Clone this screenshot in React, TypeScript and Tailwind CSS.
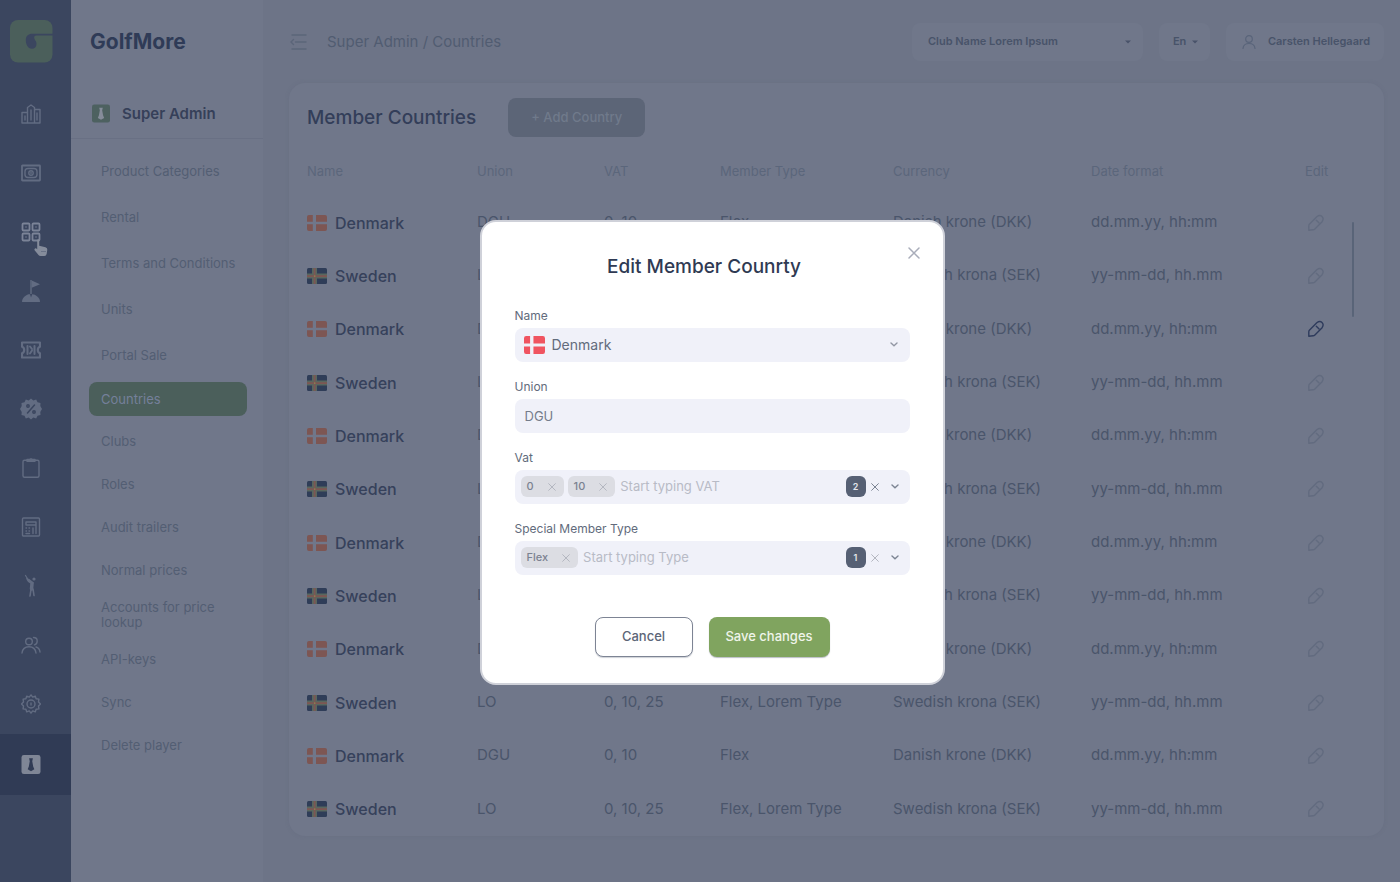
import React, { useState } from "react";

type IconProps = { className?: string };

function Glyph({ className = "size-5", children }: { className?: string; children: React.ReactNode }) {
  return (
    <svg
      viewBox="0 0 20 20"
      className={className}
      fill="none"
      stroke="currentColor"
      strokeWidth="1.4"
      strokeLinecap="round"
      strokeLinejoin="round"
      aria-hidden="true"
    >
      {children}
    </svg>
  );
}

const ChartIcon = () => (
  <Glyph>
    <path d="M1 19V8.500h5.500M6.500 19V3.500L10 1l3.500 2.500V19M13.500 5.500H19V19M1 19h18M4 12v4M10 6v10M16 9v7" />
  </Glyph>
);
const MoneyIcon = () => (
  <Glyph>
    <rect x="1" y="2.500" width="18" height="15" rx="0.500" strokeWidth="1.800" />
    <rect x="4" y="5.500" width="12" height="9" rx="3" />
    <circle cx="10" cy="10" r="2.200" />
    <path d="M10 9.500v1" />
  </Glyph>
);
const GridIcon = () => (
  <Glyph>
    <rect x="1.500" y="1.500" width="7" height="7" rx="1" strokeWidth="1.800" />
    <rect x="11.500" y="1.500" width="7" height="7" rx="1" strokeWidth="1.800" />
    <rect x="1.500" y="11.500" width="7" height="7" rx="1" strokeWidth="1.800" />
    <rect x="11.500" y="11.500" width="7" height="7" rx="1" strokeWidth="1.800" />
    <path d="M5 5h.01M15 5h.01M5 15h.01M15 15h.01" />
  </Glyph>
);
const FlagIcon = () => (
  <svg viewBox="0 0 20 24" className="h-6 w-5" fill="currentColor" aria-hidden="true">
    <path d="M9.300 1h1.400v14H9.300z" />
    <path d="M10.700 1.500 19 5.200l-8.300 3.500z" />
    <path d="M1 23c0-3 1.500-5 4-6.500 1.500-1 3-1.500 4-1.200l1 3.200 1.200-3.200c2 0 3.300.7 4.800 2 2 1.500 3 3.200 3 5.700z" />
  </svg>
);
const TicketIcon = () => (
  <Glyph>
    <path
      strokeWidth="2.200"
      d="M1 2.500h18v4.300c-1.500.4-2.200 1.500-2.200 3.200s.7 2.800 2.200 3.200v4.300H1v-4.300c1.500-.4 2.200-1.500 2.200-3.200S2.500 7.200 1 6.800z"
    />
    <path d="M6.500 6v8M9 6.500l2 2.500M9 13.500l2-3M13.500 6v8" strokeWidth="2" />
  </Glyph>
);
const DiscountIcon = () => (
  <svg viewBox="0 0 22 22" className="size-[22px]" aria-hidden="true">
    <path
      fill="currentColor"
      d="m11 .5 2.300 2 2.900-1 1.300 2.800 3 .7-.2 3.100L22 11l-1.700 2.900.2 3.100-3 .7-1.300 2.800-2.900-1-2.300 2-2.300-2-2.900 1-1.300-2.800-3-.7.2-3.100L0 11l1.700-2.900L1.500 5l3-.7 1.300-2.800 2.900 1z"
    />
    <g className="stroke-[#3b465f]" fill="none" strokeWidth="1.500" strokeLinecap="round">
      <path d="m14.500 7-7 8" />
      <circle cx="8" cy="8" r="1.200" />
      <circle cx="14" cy="14" r="1.200" />
    </g>
  </svg>
);
const ClipboardIcon = () => (
  <Glyph>
    <rect x="2" y="2.200" width="16" height="17" rx="1.500" />
    <path d="M6 3.200V1.500h2.500L10 .8l1.500.7H14v1.700z" fill="currentColor" />
  </Glyph>
);
const ReportIcon = () => (
  <Glyph>
    <rect x="1.500" y="1" width="17" height="18" rx="1" />
    <path d="M5 5h10v3H5zM5 11h.5M8 11h.5M5 14h.5M8 14h.5M5 16.500h3.500M15 8v8.500M12 11v5.500" />
  </Glyph>
);
const GolferIcon = () => (
  <svg viewBox="0 0 20 24" className="h-6 w-5" fill="none" stroke="currentColor" strokeLinecap="round" aria-hidden="true">
    <path d="m4.500 1.500 2.500 4" strokeWidth="1.200" />
    <circle cx="13" cy="5" r="1.600" fill="currentColor" stroke="none" />
    <path d="M6 4.500c1 3.500 2.500 4 4.500 4.500M7.500 5.500 12 9" strokeWidth="1.600" />
    <path d="M11 9.500 10.500 15" strokeWidth="3.500" />
    <path d="M10 15.500 9 22M12 15l1 6.500" strokeWidth="1.600" />
  </svg>
);
const PeopleIcon = () => (
  <Glyph>
    <circle cx="8" cy="6.500" r="3.300" />
    <path d="M1 18c.5-4 3-6.200 7-6.200s6.500 2.200 7 6.200M12.500 2.500c2.500 0 3.700 1.400 3.700 3.500s-1.200 3.600-2.700 3.900M15 12c2.500.7 3.700 2.300 4 5" />
  </Glyph>
);
const GearIcon = () => (
  <Glyph>
    <path d="m10 .9 1.700 2.200 2.600-1 .8 2.700 2.800.3-.4 2.800 2 2.100-2 2.100.4 2.800-2.800.3-.8 2.700-2.600-1L10 19.100l-1.700-2.200-2.600 1-.8-2.700-2.800-.3.4-2.800L.5 10l2-2.100-.4-2.800 2.800-.3.8-2.700 2.600 1z" />
    <circle cx="10" cy="10" r="4" />
    <path d="M10 9v2" />
  </Glyph>
);

function AdminIcon({ className = "" }: IconProps) {
  return (
    <svg viewBox="0 0 20 20" className={className} aria-hidden="true">
      <rect width="20" height="20" rx="2.500" fill="currentColor" />
      <path d="M8 3.500h4l-.7 3 1 5.500 1.200 3L10 17l-3.500-2 1.200-3 1-5.500z" className="fill-[var(--tie)]" />
    </svg>
  );
}

function Flag({ country, bright = false }: { country: string; bright?: boolean }) {
  if (country === "Denmark") {
    return (
      <svg viewBox="0 0 20 16" className={bright ? "h-[18px] w-[21px] text-[#f05460]" : "h-4 w-5 text-[#7d5653]"} preserveAspectRatio="none" aria-hidden="true">
        <path
          fill="currentColor"
          d="M2 0h3.800v6.700H0V2q0-2 2-2zM9 0h9q2 0 2 2v4.700H9zM0 9.300h5.800V16H2q-2 0-2-2zM9 9.300h11V14q0 2-2 2H9z"
        />
      </svg>
    );
  }
  return (
    <svg viewBox="0 0 20 16" className="h-4 w-5" aria-hidden="true">
      <rect width="20" height="16" rx="1.500" fill="#2f3d58" />
      <path d="M5 0h5v5.500h10v5H10V16H5v-5.500H0v-5h5z" fill="#59675f" />
      <path d="M6.700 0h1.800v7.200H20v1.800H8.500V16H6.700V9H0V7.200h6.700z" fill="#7d5653" />
      <path d="M7 7.500h1.400v1.300H7z" fill="#8a9150" />
    </svg>
  );
}

function PencilIcon() {
  return (
    <svg viewBox="0 0 18 18" className="size-[18px]" fill="none" stroke="currentColor" strokeWidth="1.400" strokeLinejoin="round" strokeLinecap="round" aria-hidden="true">
      <path d="M1.800 16.200v-4.500q0-1 .8-1.800l7.200-7.200q3-2.400 5.200-.3t.1 5.300l-7.200 7.200q-.8.800-1.800.8z" />
      <path d="m9.300 6.200 2.800 2.800" />
    </svg>
  );
}

function Chevron({ className = "" }: IconProps) {
  return (
    <svg viewBox="0 0 8 5" className={"h-[5px] w-2 " + className} fill="none" stroke="currentColor" strokeWidth="1.400" strokeLinecap="round" aria-hidden="true">
      <path d="m1 1 3 2.700L7 1" />
    </svg>
  );
}

function Caret() {
  return (
    <svg viewBox="0 0 6 4" className="pointer-events-none absolute right-3 h-1 w-1.5" fill="currentColor" aria-hidden="true">
      <path d="M0 .5h6L3 3.500z" />
    </svg>
  );
}

function Cross({ className = "size-2" }: IconProps) {
  return (
    <svg viewBox="0 0 12 12" className={className} fill="none" stroke="currentColor" strokeWidth="1.500" strokeLinecap="round" aria-hidden="true">
      <path d="m1 1 10 10M11 1 1 11" />
    </svg>
  );
}

const railItems = [
  { label: "Statistics", icon: <ChartIcon /> },
  { label: "Payments", icon: <MoneyIcon /> },
  { label: "Overview", icon: <GridIcon />, hovered: true },
  { label: "Courses", icon: <FlagIcon /> },
  { label: "Tickets", icon: <TicketIcon /> },
  { label: "Discounts", icon: <DiscountIcon /> },
  { label: "Bookings", icon: <ClipboardIcon /> },
  { label: "Reports", icon: <ReportIcon /> },
  { label: "Players", icon: <GolferIcon /> },
  { label: "Members", icon: <PeopleIcon /> },
  { label: "Settings", icon: <GearIcon /> },
];

function Rail() {
  return (
    <nav aria-label="Main" className="flex w-[71px] shrink-0 flex-col bg-[#3b465f] text-[#626c82]">
      <a href="#home" aria-label="Home" className="mt-5 ml-2.5 block size-[43px]">
        <svg viewBox="0 0 43 43" className="size-full" aria-hidden="true">
          <rect width="42.500" height="42.500" rx="8" fill="#4b5f5b" />
          <path
            fill="#3b465f"
            d="M43 13.700H22.500c-4.500 0-6.700 2.300-6.700 6.300 0 4.500 2.200 8.800 6 8.800 3 0 4.700-2 4.700-4.800 0-3.500-2.300-4-2.300-6.500 0-1.300.8-2 2.300-2H43z"
          />
        </svg>
      </a>
      <ul className="mt-[22px]">
        {railItems.map((item) => (
          <li key={item.label} className="relative">
            <a href="#section" aria-label={item.label} className="flex h-[59px] items-center justify-center pr-[9px] pb-0.5">
              <span className={item.hovered ? "text-[#7b8397]" : ""}>{item.icon}</span>
            </a>
            {item.hovered && (
              <svg viewBox="0 0 14 18" className="absolute top-[36px] left-[34px] h-[18px] w-3.5" fill="#858c9b" aria-hidden="true">
                <path d="M3.200 1.500q0-1.200 1-1.200t1 1.200v5.300l6.300 1.400q2 .5 1.800 2.500l-.6 4q-.4 2.300-2.300 2.300H6.500q-1.300 0-2-1L.6 11.200q-.6-1.200.4-1.700t2.200.8z" />
                <path d="M7 12.500h5" stroke="#626c80" strokeWidth="0.800" />
              </svg>
            )}
          </li>
        ))}
        <li>
          <a href="#admin" aria-label="Super Admin" aria-current="page" className="flex h-[61px] items-center justify-center bg-[#303b55] pr-[9px]">
            <AdminIcon className="h-[19px] w-5 text-[#7f8696] [--tie:#303b55]" />
          </a>
        </li>
      </ul>
    </nav>
  );
}

const upperMenu = ["Product Categories", "Rental", "Terms and Conditions", "Units", "Portal Sale"];
const lowerMenu = ["Clubs", "Roles", "Audit trailers", "Normal prices", "Accounts for price lookup", "API-keys", "Sync", "Delete player"];

function Sidebar() {
  return (
    <aside className="flex w-[192px] shrink-0 flex-col bg-[#70778a] text-[13px] leading-[15px] text-[#535e73]">
      <p className="mt-7 pl-[19px] text-[21px] leading-7 font-bold text-[#2f3b57]">GolfMore</p>
      <div className="mt-[33px] flex h-[50px] items-center gap-3 border-b border-[#697084] pl-[21px]">
        <AdminIcon className="h-[19px] w-[18px] text-[#4d6160] [--tie:#858c9a]" />
        <h1 className="text-[15px] leading-6 font-semibold text-[#364059]">Super Admin</h1>
      </div>
      <ul className="mt-[9px]">
        {upperMenu.map((label) => (
          <li key={label}>
            <a href="#menu" className="flex h-[46px] items-center pl-[30px]">{label}</a>
          </li>
        ))}
        <li className="my-1 pr-4 pl-[18px]">
          <a href="#countries" aria-current="page" className="flex h-[34px] items-center rounded-lg bg-[#4b5f5b] pl-3 text-[#75809a]">
            Countries
          </a>
        </li>
        {lowerMenu.map((label) => (
          <li key={label}>
            <a href="#menu" className="flex min-h-[43px] items-center py-2 pr-10 pl-[30px]">{label}</a>
          </li>
        ))}
      </ul>
    </aside>
  );
}

function TopBar() {
  return (
    <header className="flex h-[83px] items-center justify-between">
      <div className="flex items-center gap-[18px]">
        <button type="button" aria-label="Collapse menu" className="flex size-5 items-center">
          <svg viewBox="0 0 18 16" className="h-4 w-[18px] text-[#5b6579]" fill="none" stroke="currentColor" strokeWidth="1.400" strokeLinecap="round" aria-hidden="true">
            <path d="M3 1h14M6.500 8H17M3 15h14M4.500 5.500 2 8l2.500 2.500" />
          </svg>
        </button>
        <p className="text-[15px] leading-6 text-[#515c71]">Super Admin / Countries</p>
      </div>
      <div className="flex h-[38px] gap-4 text-[11px] font-semibold text-[#485369]">
        <div className="relative flex w-[231px] items-center rounded-lg bg-[#70778a]">
          <select aria-label="Club" className="h-full w-full appearance-none rounded-lg bg-transparent pl-4">
            <option>Club Name Lorem Ipsum</option>
          </select>
          <Caret />
        </div>
        <div className="relative flex w-[51px] items-center rounded-lg bg-[#70778a]">
          <select aria-label="Language" className="h-full w-full appearance-none rounded-lg bg-transparent pl-3.5">
            <option>En</option>
          </select>
          <Caret />
        </div>
        <button type="button" className="flex items-center gap-3 rounded-lg bg-[#70778a] pr-3.5 pl-4">
          <svg viewBox="0 0 14 14" className="size-3.5 text-[#59647a]" fill="none" stroke="currentColor" strokeWidth="1.200" strokeLinecap="round" aria-hidden="true">
            <circle cx="7" cy="4" r="3.300" />
            <path d="M1 13.500c.3-3.300 2.400-5 6-5s5.700 1.700 6 5" />
          </svg>
          Carsten Hellegaard
        </button>
      </div>
    </header>
  );
}

const denmark = { name: "Denmark", union: "DGU", vat: "0, 10", type: "Flex", currency: "Danish krone (DKK)", date: "dd.mm.yy, hh:mm" };
const sweden = { name: "Sweden", union: "LO", vat: "0, 10, 25", type: "Flex, Lorem Type", currency: "Swedish krona (SEK)", date: "yy-mm-dd, hh.mm" };
const rows = Array.from({ length: 12 }, (_, i) => (i % 2 === 0 ? denmark : sweden));

function CountriesCard() {
  return (
    <section className="relative rounded-2xl bg-[#70778a] pt-[15px] pl-[18px] shadow-[0_0_4px_rgba(90,98,120,0.2)]">
      <div className="flex items-center gap-8">
        <h2 className="text-[19px] leading-7 font-medium text-[#333e59]">Member Countries</h2>
        <button type="button" className="h-[39px] rounded-lg bg-[#5c6577] px-[23px] text-[13px] font-medium text-[#707a8b]">
          + Add Country
        </button>
      </div>
      <table className="mt-[11px] w-full table-fixed text-left text-[15px] text-[#4a556b]">
        <colgroup>
          <col className="w-[170px]" />
          <col className="w-[127px]" />
          <col className="w-[116px]" />
          <col className="w-[173px]" />
          <col className="w-[198px]" />
          <col className="w-[214px]" />
          <col className="w-[79px]" />
        </colgroup>
        <thead>
          <tr className="h-12 text-[13px] text-[#5b667b]">
            {["Name", "Union", "VAT", "Member Type", "Currency", "Date format", "Edit"].map((h) => (
              <th key={h} scope="col" className="p-0 font-normal">{h}</th>
            ))}
          </tr>
        </thead>
        <tbody>
          {rows.map((row, i) => (
            <tr key={i} className="h-[53px] [&:nth-child(3n)]:h-[54px]">
              <td className="p-0">
                <span className="flex items-center gap-2 text-[16px] font-medium text-[#36415b]">
                  <Flag country={row.name} />
                  {row.name}
                </span>
              </td>
              <td className="p-0">{row.union}</td>
              <td className="p-0">{row.vat}</td>
              <td className="p-0">{row.type}</td>
              <td className="p-0">{row.currency}</td>
              <td className="p-0">{row.date}</td>
              <td className="p-0">
                <button type="button" aria-label={"Edit " + row.name} className={i === 2 ? "ml-0.5 block text-[#2e3b5c]" : "ml-0.5 block text-[#626b7f]"}>
                  <PencilIcon />
                </button>
              </td>
            </tr>
          ))}
        </tbody>
      </table>
      <span className="absolute top-[139px] right-[30px] h-[95px] w-0.5 rounded bg-[#596478]" />
    </section>
  );
}

function TagField({ id, label, placeholder, tags, clearClass }: { id: string; label: string; placeholder: string; tags: string[]; clearClass: string }) {
  return (
    <div className="flex flex-col">
      <label htmlFor={id} className="text-[12px] leading-6 text-[#626b7c]">{label}</label>
      <div className="flex h-[34px] items-center rounded-lg bg-[#f0f1f9] pr-[11px] pl-1.5">
        <ul className="flex gap-1">
          {tags.map((tag) => (
            <li key={tag} className="flex h-[21px] items-center gap-3.5 rounded-md bg-[#dcdde3] pr-2 pl-1.5 text-[11px] font-medium text-[#7b8291]">
              {tag}
              <button type="button" aria-label={"Remove " + tag} className="text-[#b4b7c0]">
                <Cross />
              </button>
            </li>
          ))}
        </ul>
        <input id={id} type="text" placeholder={placeholder} className="ml-[5px] min-w-0 flex-1 bg-transparent text-[13px] outline-none placeholder:text-[#b8bbc6]" />
        <span className="flex h-[21px] w-5 items-center justify-center rounded-md bg-[#566074] text-[9px] font-semibold text-[#e4e6ec]">{tags.length}</span>
        <button type="button" aria-label={"Clear " + label} className={clearClass}>
          <Cross />
        </button>
        <button type="button" aria-label={"Open " + label} className="ml-3 text-[#7c8493]">
          <Chevron />
        </button>
      </div>
    </div>
  );
}

function EditDialog() {
  const [union, setUnion] = useState("DGU");
  return (
    <div className="fixed inset-0 flex items-center justify-center pt-[22px] pl-6">
      <form
        role="dialog"
        aria-modal="true"
        aria-labelledby="dialog-title"
        onSubmit={(e) => e.preventDefault()}
        className="relative w-[465px] rounded-2xl border-2 border-[#cfd1d9] bg-white px-[33px] pt-[31px] pb-[26px]"
      >
        <button type="button" aria-label="Close" className="absolute top-[25px] right-[23px] text-[#a9adba]">
          <Cross className="size-3" />
        </button>
        <h2 id="dialog-title" className="pr-4 text-center text-[19px] leading-7 font-medium text-[#2f3a53]">Edit Member Counrty</h2>
        <div className="mt-[23px] flex flex-col gap-[13px]">
          <div className="flex flex-col">
            <label htmlFor="name" className="text-[12px] leading-6 text-[#626b7c]">Name</label>
            <div className="relative flex h-[34px] items-center rounded-lg bg-[#f0f1f9]">
              <span className="pointer-events-none absolute left-[9px]">
                <Flag country="Denmark" bright />
              </span>
              <select id="name" className="h-full w-full appearance-none rounded-lg bg-transparent pl-[37px] text-[14px] text-[#626b7c]">
                <option>Denmark</option>
                <option>Sweden</option>
              </select>
              <Chevron className="pointer-events-none absolute right-3 text-[#9297a4]" />
            </div>
          </div>
          <div className="flex flex-col">
            <label htmlFor="union" className="text-[12px] leading-6 text-[#626b7c]">Union</label>
            <input
              id="union"
              type="text"
              value={union}
              onChange={(e) => setUnion(e.target.value)}
              className="h-[34px] rounded-lg bg-[#f0f1f9] px-2.5 text-[13px] text-[#747c8b] outline-none"
            />
          </div>
          <TagField id="vat" label="Vat" placeholder="Start typing VAT" tags={["0", "10"]} clearClass="ml-[5px] text-[#7c8493]" />
          <TagField id="member-type" label="Special Member Type" placeholder="Start typing Type" tags={["Flex"]} clearClass="ml-[5px] text-[#b4b7c0]" />
        </div>
        <div className="mt-[42px] flex justify-center gap-4 text-[13px] font-medium">
          <button type="button" className="h-10 w-[98px] rounded-lg border border-[#7d8494] bg-white text-[#5c6577] shadow-[0_1px_1px_rgba(60,70,95,0.25)]">Cancel</button>
          <button type="submit" className="h-10 w-[121px] rounded-lg bg-[#80a45f] text-[#eff4ea] shadow-[0_1px_1px_rgba(60,70,95,0.35)]">Save changes</button>
        </div>
      </form>
    </div>
  );
}

export default function App() {
  return (
    <div className="flex min-h-screen bg-[#6d7487] font-['Inter','Liberation_Sans',sans-serif]">
      <Rail />
      <Sidebar />
      <main className="min-w-0 flex-1 pr-4 pl-[26px]">
        <TopBar />
        <CountriesCard />
      </main>
      <EditDialog />
    </div>
  );
}
